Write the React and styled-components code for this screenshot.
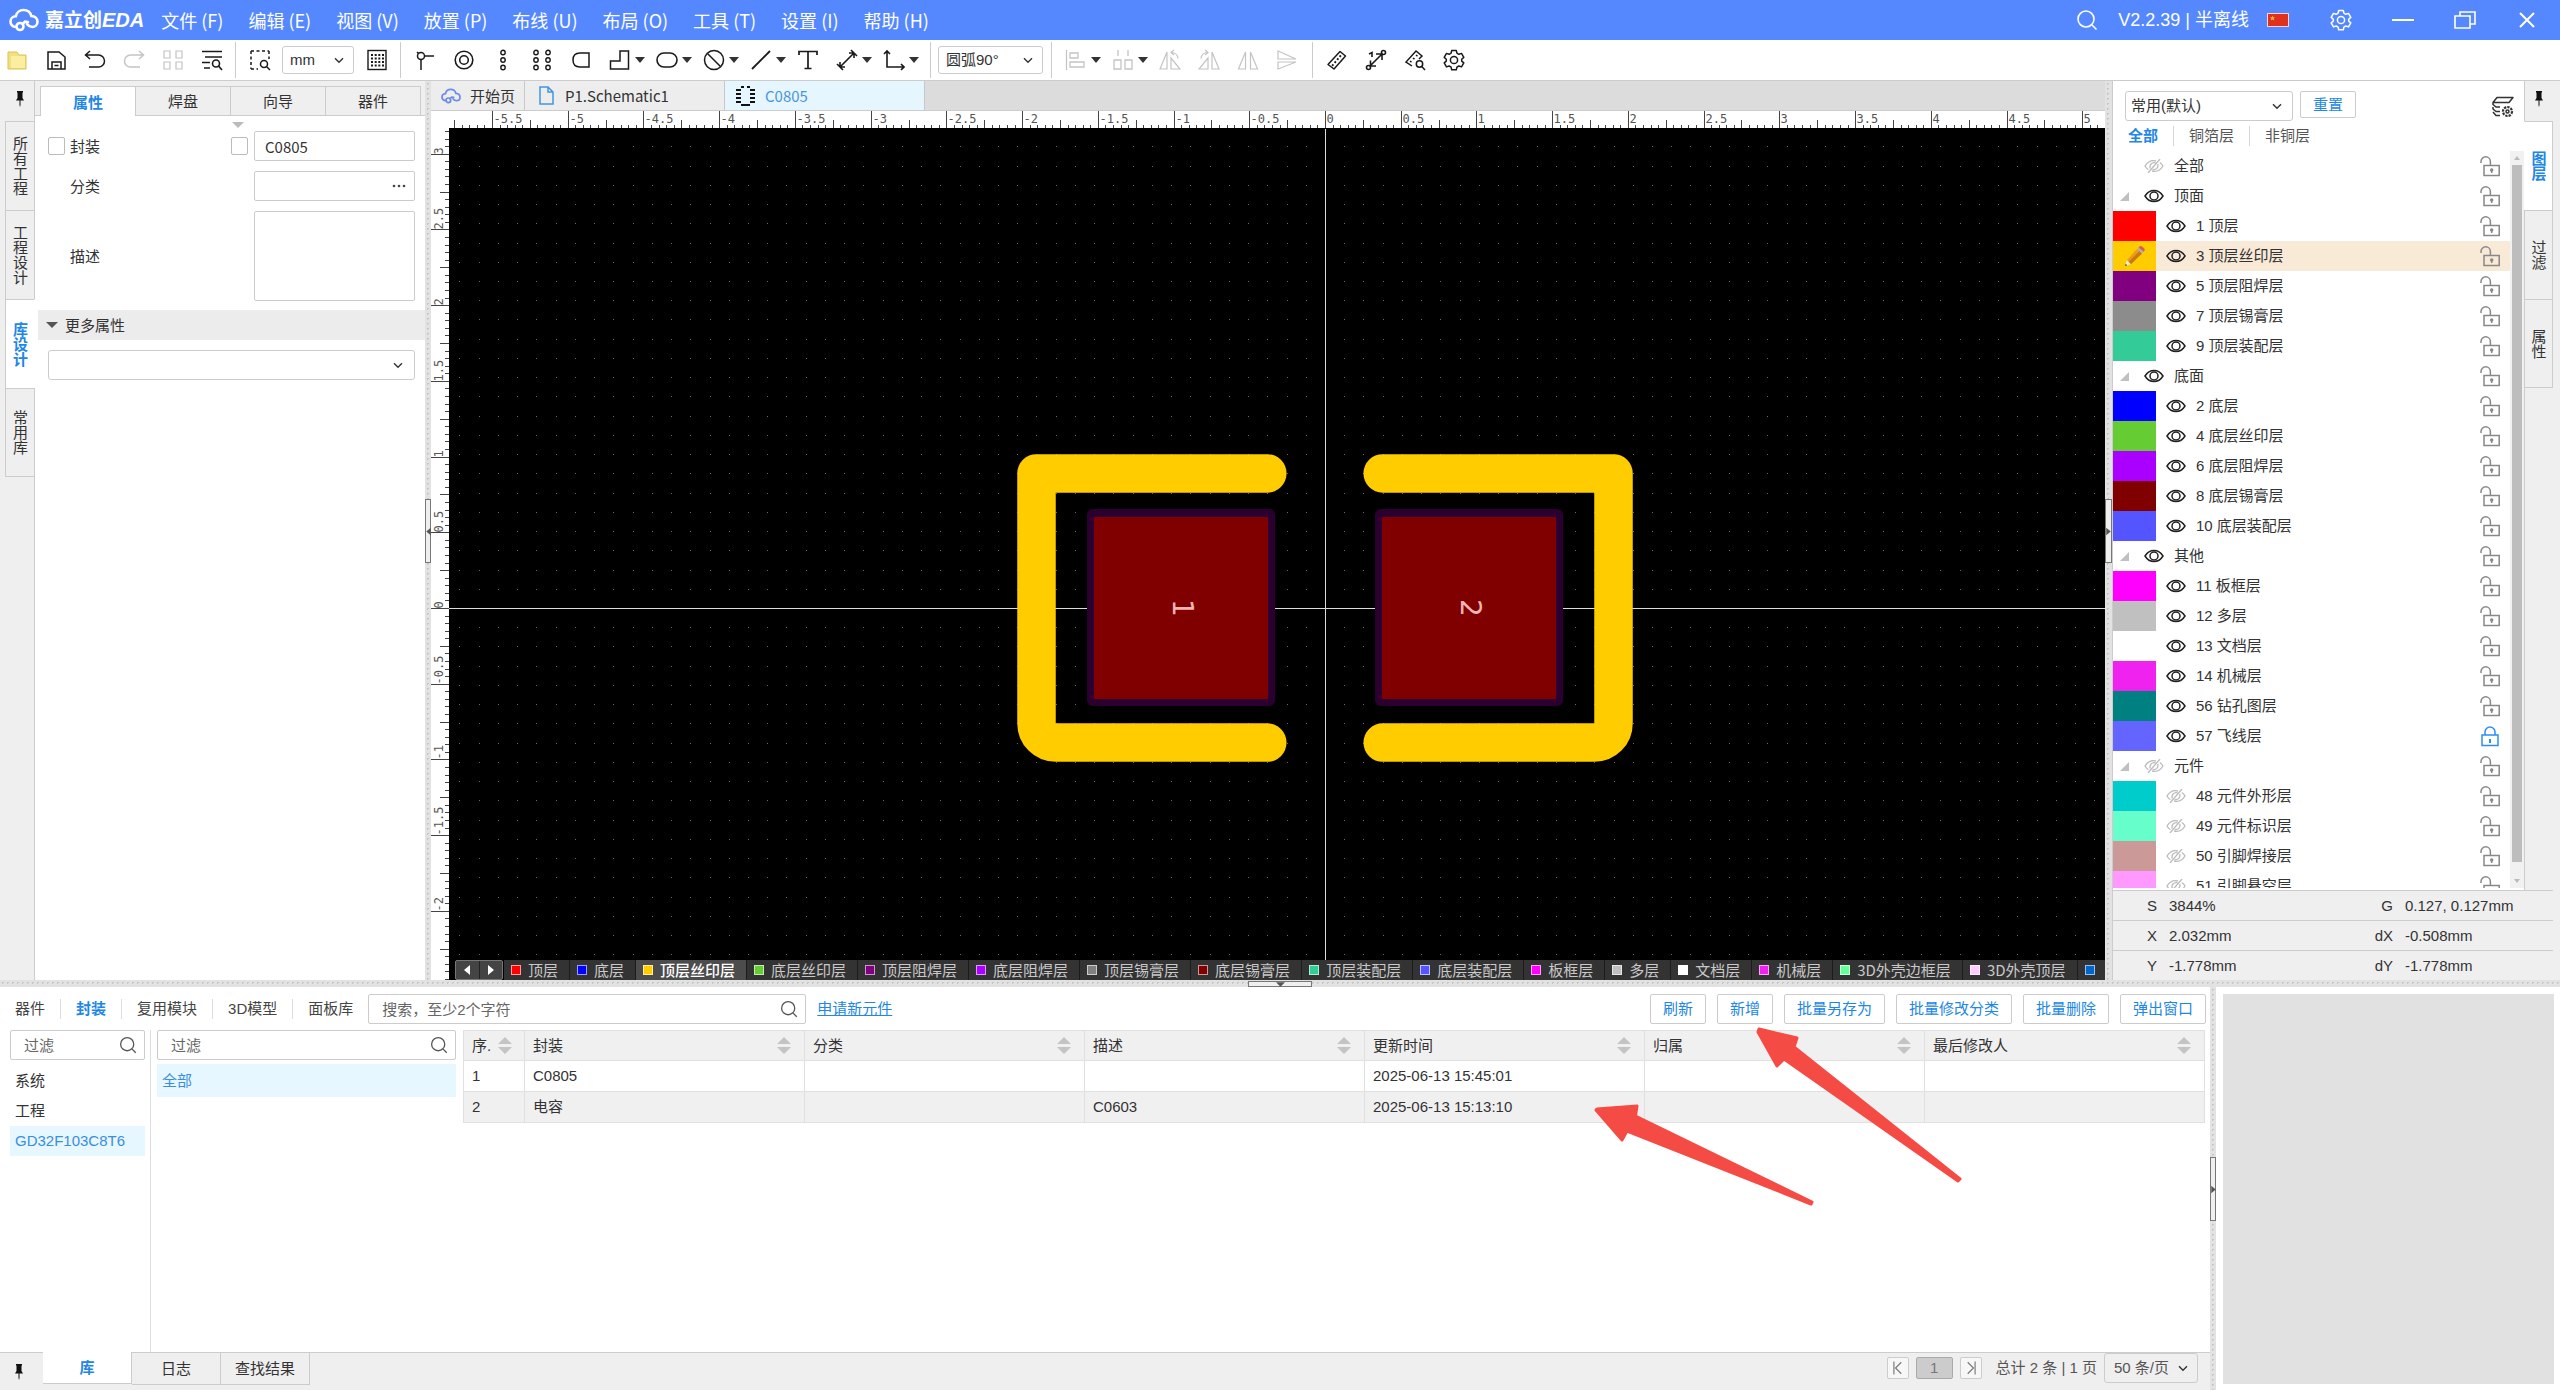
import React from "react";
import styled, { createGlobalStyle, css } from "styled-components";

const BLUE = "#2186e6";
const LINE = "#cccccc";
const GREY = "#efefef";

// canvas scale: pixels for 0.05mm on the rulers and for one 0.127mm grid cell
const TICK = 7.5725;
const CELL = 19.234;

const topLayers = [
  { id: 1, name: "顶层", color: "#ff0000" },
  { id: 3, name: "顶层丝印层", color: "#ffcc00", active: true },
  { id: 5, name: "顶层阻焊层", color: "#800080" },
  { id: 7, name: "顶层锡膏层", color: "#8c8c8c" },
  { id: 9, name: "顶层装配层", color: "#33cc99" },
];

const layerGroups = [
  { name: "顶面", visible: true, layers: topLayers },
  {
    name: "底面",
    visible: true,
    layers: [
      { id: 2, name: "底层", color: "#0000ff" },
      { id: 4, name: "底层丝印层", color: "#66cc33" },
      { id: 6, name: "底层阻焊层", color: "#aa00ff" },
      { id: 8, name: "底层锡膏层", color: "#800000" },
      { id: 10, name: "底层装配层", color: "#5555ff" },
    ],
  },
  {
    name: "其他",
    visible: true,
    layers: [
      { id: 11, name: "板框层", color: "#ff00ff" },
      { id: 12, name: "多层", color: "#c0c0c0" },
      { id: 13, name: "文档层", color: "#ffffff" },
      { id: 14, name: "机械层", color: "#f022f0" },
      { id: 56, name: "钻孔图层", color: "#008080" },
      { id: 57, name: "飞线层", color: "#6464ff", locked: true },
    ],
  },
  {
    name: "元件",
    visible: false,
    layers: [
      { id: 48, name: "元件外形层", color: "#00cccc" },
      { id: 49, name: "元件标识层", color: "#66ffcc" },
      { id: 50, name: "引脚焊接层", color: "#cc9999" },
      { id: 51, name: "引脚悬空层", color: "#ff99ff" },
    ],
  },
];

const layerTabs = [
  ["顶层", "#ff0000"],
  ["底层", "#0000ff"],
  ["顶层丝印层", "#ffcc00"],
  ["底层丝印层", "#66cc33"],
  ["顶层阻焊层", "#800080"],
  ["底层阻焊层", "#aa00ff"],
  ["顶层锡膏层", "#808080"],
  ["底层锡膏层", "#800000"],
  ["顶层装配层", "#33cc99"],
  ["底层装配层", "#5555ff"],
  ["板框层", "#ff00ff"],
  ["多层", "#c0c0c0"],
  ["文档层", "#ffffff"],
  ["机械层", "#f022f0"],
  ["3D外壳边框层", "#66ff99"],
  ["3D外壳顶层", "#ffccff"],
  ["", "#0066cc"],
];

const columns = ["序.", "封装", "分类", "描述", "更新时间", "归属", "最后修改人"];
const rows = [
  ["1", "C0805", "", "", "2025-06-13 15:45:01", "", ""],
  ["2", "电容", "", "C0603", "2025-06-13 15:13:10", "", ""],
];

const GlobalStyle = createGlobalStyle`
  *, *::before { box-sizing: border-box; }
  body {
    margin: 0;
    background: #fff;
    color: #333;
    font: 15px/20px "Noto Sans CJK SC", sans-serif;
  }
  button, input, select, textarea {
    font: inherit;
    color: inherit;
    margin: 0;
  }
  button {
    padding: 0;
    border: 0;
    background: none;
    white-space: nowrap;
  }
  a { color: inherit; text-decoration: none; }
  ul { margin: 0; padding: 0; list-style: none; }
  svg { display: block; }
`;

const Page = styled.div`
  height: 100vh;
  display: grid;
  grid-template-rows: 40px 40px minmax(0, 1fr) 7px 403px;
  overflow: hidden;
`;

/* ---------- title bar ---------- */

const TitleBar = styled.header`
  display: flex;
  align-items: center;
  background: #5588ff;
  color: #fff;
  font-size: 18px;
`;

const Logo = styled.a`
  display: flex;
  align-items: center;
  gap: 6px;
  padding-left: 9px;
  font-size: 19px;
  font-weight: 700;
`;

const LogoLatin = styled.i`
  font: italic 700 20px "Liberation Sans", sans-serif;
`;

const Menu = styled.nav`
  display: flex;
  flex: 1;
  gap: 25px;
  padding-left: 17px;
`;

const TitleRight = styled.div`
  display: flex;
  align-items: center;
  padding-right: 22px;
  font-family: "Liberation Sans", "Noto Sans CJK SC", sans-serif;
`;

const Version = styled.span`
  padding: 0 18px 0 20px;
`;

const WindowButtons = styled.div`
  display: flex;
  align-items: center;
  gap: 40px;
  padding-left: 41px;
`;

/* ---------- toolbar ---------- */

const Toolbar = styled.div`
  display: flex;
  align-items: center;
`;

const ToolGroup = styled.div`
  display: flex;
  align-items: center;
  height: 36px;
  padding: 0 ${(p) => p.$end ?? 12}px 0 ${(p) => p.$start ?? 13}px;
  border-right: 1px solid ${(p) => (p.$last ? "transparent" : LINE)};
`;

const ToolButton = styled.button`
  display: flex;
  align-items: center;
  gap: 4px;
  color: ${(p) => (p.$off ? "#c4c4c4" : "#1a1a1a")};
  margin-right: ${(p) => (p.$menu ? 10 : 17)}px;
  &:last-child { margin-right: 0; }
`;

const Caret = styled.span`
  border: 5px solid transparent;
  border-top: 6px solid #333;
  border-bottom: 0;
  height: 6px;
  margin-right: 1px;
`;

const SelectBox = styled.div`
  position: relative;
  display: flex;
  align-items: center;
  flex: none;
  width: ${(p) => p.$width};
  margin: ${(p) => p.$margin || 0};
  font-family: "Liberation Sans", "Noto Sans CJK SC", sans-serif;
  select {
    appearance: none;
    width: 100%;
    height: ${(p) => p.$height || 28}px;
    padding: 0 22px 0 ${(p) => p.$inset ?? 7}px;
    border: 1px solid ${LINE};
    border-radius: 3px;
    background: ${(p) => p.$bg || "#fff"};
  }
  svg {
    position: absolute;
    right: ${(p) => p.$arrow ?? 10}px;
    pointer-events: none;
  }
`;

/* ---------- work area ---------- */

const Workspace = styled.main`
  display: grid;
  grid-template-columns: 35px 390px 6px minmax(0, 1fr) 7px 412px 36px;
  min-height: 0;
  border-top: 1px solid ${LINE};
`;

const dots = css`
  background-color: #e2e2e2;
  background-image: radial-gradient(circle, #c6c6c6 1px, transparent 1px);
  background-size: 5px 5px;
`;

const Splitter = styled.div`
  position: relative;
  ${dots}
`;

const Handle = styled.button`
  position: absolute;
  left: 0;
  top: ${(p) => p.$top};
  width: 100%;
  height: 64px;
  display: flex;
  align-items: center;
  justify-content: center;
  background: ${GREY};
  border: 1px solid #777;
  svg { flex: none; }
`;

const FlatHandle = styled(Handle)`
  left: calc(50% - 32px);
  top: 1px;
  width: 64px;
  height: 6px;
`;

const SideStrip = styled.nav`
  display: flex;
  flex-direction: column;
  min-height: 0;
  background: ${GREY};
  padding: ${(p) => (p.$right ? "0 7px 0 0" : "0 0 0 5px")};
  border-${(p) => (p.$right ? "left" : "right")}: 1px solid ${LINE};
`;

const PinButton = styled.button`
  height: 40px;
  display: flex;
  align-items: center;
  justify-content: center;
  padding-bottom: 4px;
`;

const SideTab = styled.button`
  flex: none;
  height: 89px;
  display: flex;
  align-items: center;
  justify-content: center;
  writing-mode: vertical-rl;
  text-orientation: upright;
  border: 1px solid ${LINE};
  border-bottom-width: ${(p) => (p.$end ? 1 : 0)}px;
  background: ${(p) => (p.$active ? "#fff" : "transparent")};
  color: ${(p) => (p.$active ? BLUE : "#333")};
  font-weight: ${(p) => (p.$active ? 700 : 400)};
  margin: ${(p) => (p.$right ? "0 0 0 -1px" : "0 -1px 0 0")};
  border-${(p) => (p.$right ? "left" : "right")}-color: ${(p) => (p.$active ? "#fff" : LINE)};
`;

const LeftPanel = styled.section`
  display: flex;
  flex-direction: column;
  background: #fff;
`;

const PanelTabs = styled.div`
  display: flex;
  height: 35px;
  padding: 5px 4px 0 5px;
  background: ${GREY};
  border-bottom: 1px solid ${LINE};
`;

const PanelTab = styled.button`
  flex: 1;
  border: 1px solid ${LINE};
  border-left-width: ${(p) => (p.$first ? 1 : 0)}px;
  border-bottom: 0;
  margin-bottom: ${(p) => (p.$first ? -1 : 0)}px;
  background: ${(p) => (p.$first ? "#fff" : GREY)};
  color: ${(p) => (p.$first ? BLUE : "#333")};
  font-weight: ${(p) => (p.$first ? 700 : 400)};
`;

const Form = styled.form`
  display: grid;
  grid-template-columns: 17px minmax(0, 1fr) 18px 161px;
  column-gap: 5px;
  row-gap: 10px;
  align-items: center;
  padding: 0 10px 9px 13px;
  input[type="text"], textarea {
    grid-column: 4;
    width: 100%;
    height: 30px;
    padding: 0 10px;
    border: 1px solid ${LINE};
    border-radius: 2px;
    resize: none;
    background: transparent;
  }
  textarea { height: 90px; display: block; }
  label { grid-column: 2; }
`;

const Check = styled.input.attrs({ type: "checkbox" })`
  appearance: none;
  width: 17px;
  height: 18px;
  border: 1px solid #bbb;
  border-radius: 2px;
  background: #fff;
`;

const CollapseMark = styled.div`
  display: flex;
  justify-content: center;
  height: 15px;
  padding: 3px 0 0 16px;
`;

const MoreField = styled.div`
  grid-column: 4;
  position: relative;
  display: flex;
  button {
    position: absolute;
    right: 9px;
    top: 0;
    height: 30px;
  }
`;

const Section = styled.h2`
  display: flex;
  align-items: center;
  gap: 7px;
  height: 30px;
  margin: 0 0 10px 3px;
  padding-left: 8px;
  background: #ececec;
  font-size: 15px;
  font-weight: 400;
`;

const Editor = styled.section`
  display: flex;
  flex-direction: column;
  min-width: 0;
  min-height: 0;
`;

const FileTabs = styled.div`
  display: flex;
  flex: none;
  height: 30px;
  background: #dcdcdc;
  border-bottom: 1px solid ${LINE};
`;

const FileTab = styled.button`
  display: flex;
  align-items: center;
  gap: ${(p) => p.$gap || 9}px;
  width: ${(p) => p.$width}px;
  padding-left: ${(p) => p.$inset || 10}px;
  border-right: 1px solid #c8c8c8;
  background: ${(p) => (p.$active ? "#e6f6ff" : "#ededed")};
  color: ${(p) => (p.$active ? "#4a94dc" : "#333")};
`;

const Board = styled.div`
  flex: 1;
  min-height: 0;
  display: grid;
  grid-template-columns: 18px minmax(0, 1fr);
  grid-template-rows: 18px minmax(0, 1fr) 20px;
  background: #fff;
  svg { width: 100%; height: 100%; }
  text { font: 12px "DejaVu Sans Mono", monospace; fill: #555; }
`;

const TopRuler = styled.div`
  grid-column: 1 / 3;
  overflow: hidden;
`;

const LeftRuler = styled.div`
  grid-row: 2 / 4;
  overflow: hidden;
`;

const Canvas = styled.div`
  background: #000;
  overflow: hidden;
  .pin { font: 28px "DejaVu Sans", sans-serif; fill: #f0b4b4; text-anchor: middle; }
`;

const LayerBar = styled.div`
  display: flex;
  padding-left: 6px;
  background: #000;
  overflow: hidden;
  color: #ccc;
  svg { width: auto; height: auto; }
`;

const LayerArrows = styled.div`
  flex: none;
  display: flex;
  width: 48px;
  margin-right: 1px;
  border: 1px solid #777;
  border-radius: 2px;
  background: #444;
  button {
    flex: 1;
    display: flex;
    align-items: center;
    justify-content: center;
  }
  button + button { border-left: 1px solid #222; }
`;

const LayerTab = styled.button`
  flex: none;
  display: flex;
  align-items: center;
  gap: 7px;
  padding: 0 11px 0 7px;
  border-right: 1px solid #1c1c1c;
  background: ${(p) => (p.$active ? "#4c4c4c" : "#333")};
  color: ${(p) => (p.$active ? "#fff" : "#c8c8c8")};
  font-weight: ${(p) => (p.$active ? 500 : 400)};
  line-height: 20px;
  &::before {
    content: "";
    width: 10px;
    height: 10px;
    border: 1px solid rgba(255, 255, 255, 0.6);
    background: ${(p) => p.$color};
  }
`;

/* ---------- layer panel ---------- */

const LayerPanel = styled.section`
  display: flex;
  flex-direction: column;
  min-height: 0;
  background: #fff;
  border-left: 1px solid ${LINE};
  font-family: "Liberation Sans", "Noto Sans CJK SC", sans-serif;
`;

const LayerHead = styled.div`
  display: flex;
  align-items: flex-start;
  gap: 7px;
  padding: 10px 10px 0 12px;
  height: 45px;
  > button:last-child { margin: 5px 0 0 auto; }
`;

const PlainButton = styled.button`
  height: ${(p) => p.$height || 30}px;
  padding: 0 12px;
  border: 1px solid ${LINE};
  border-radius: 2px;
  background: #fff;
  color: ${BLUE};
`;

const LayerFilter = styled.div`
  display: flex;
  align-items: center;
  height: 20px;
  margin-bottom: 5px;
`;

const FilterTab = styled.button`
  height: 20px;
  padding: 0 15px;
  color: ${(p) => (p.$active ? BLUE : "#555")};
  font-weight: ${(p) => (p.$active ? 700 : 400)};
  & + & { border-left: 1px solid #d5d5d5; }
`;

const LayerScroll = styled.div`
  flex: 1;
  min-height: 0;
  display: flex;
`;

const LayerList = styled.ul`
  flex: 1;
  overflow: hidden;
`;

const LayerRow = styled.li`
  display: flex;
  align-items: center;
  height: 30px;
  padding-right: 10px;
  background: ${(p) => (p.$active ? "#f8ead6" : "#fff")};
`;

const Swatch = styled.span`
  display: flex;
  align-items: center;
  justify-content: center;
  width: 43px;
  height: 30px;
  margin-right: 10px;
  background: ${(p) => p.$color};
`;

const GroupMark = styled.span`
  display: flex;
  width: 31px;
  padding-left: 7px;
`;

const LayerName = styled.span`
  flex: 1;
  padding-left: 10px;
`;

const Scrollbar = styled.div`
  display: flex;
  flex-direction: column;
  align-items: center;
  justify-content: space-between;
  width: 14px;
  padding: 5px 0;
  background: #f1f1f1;
  svg { flex: none; }
`;

const Thumb = styled.div`
  width: 10px;
  flex: 1;
  margin: 5px 0 17px;
  background: #bdbdbd;
`;

const StatusList = styled.dl`
  flex: none;
  margin: 2px -29px 0 0;
  position: relative;
  background: ${GREY};
`;

const StatusRow = styled.div`
  display: grid;
  grid-template-columns: 44px 168px 44px 1fr;
  column-gap: 12px;
  align-items: center;
  height: 30px;
  border-top: 1px solid ${LINE};
  dt { text-align: right; }
  dd { margin: 0; }
`;

/* ---------- library ---------- */

const Bottom = styled.section`
  position: relative;
  display: grid;
  grid-template-columns: minmax(0, 1fr) 6px 344px;
  min-height: 0;
  font-family: "Liberation Sans", "Noto Sans CJK SC", sans-serif;
`;

const Library = styled.div`
  display: flex;
  flex-direction: column;
  min-width: 0;
`;

const LibraryHead = styled.div`
  display: flex;
  align-items: center;
  gap: 11px;
  padding: 7px 4px 6px 0;
`;

const LibraryTabs = styled.div`
  display: flex;
  margin-right: -11px;
`;

const LibraryTab = styled.button`
  height: 20px;
  line-height: 20px;
  padding: 0 15px;
  color: ${(p) => (p.$active ? BLUE : "#444")};
  font-weight: ${(p) => (p.$active ? 700 : 400)};
  & + & { border-left: 1px solid #ddd; }
`;

const SearchBox = styled.div`
  position: relative;
  display: flex;
  align-items: center;
  flex: none;
  width: ${(p) => p.$width};
  input {
    width: 100%;
    height: 30px;
    padding: 0 32px 0 13px;
    border: 1px solid ${LINE};
    border-radius: 2px;
    background: #fff;
  }
  input::placeholder { color: #666; opacity: 1; }
  button {
    position: absolute;
    right: 8px;
    color: #555;
  }
`;

const ApplyLink = styled.a`
  color: ${BLUE};
  text-decoration: underline;
  margin-right: auto;
`;

const LibraryBody = styled.div`
  flex: 1;
  display: grid;
  grid-template-columns: 151px 306px minmax(0, 1fr);
  padding-right: 5px;
`;

const ProjectColumn = styled.div`
  padding: 0 5px 0 10px;
  border-right: 1px solid #ddd;
`;

const ClassColumn = styled.div`
  padding: 0 1px 0 6px;
`;

const PickList = styled.ul`
  padding-top: ${(p) => p.$top}px;
`;

const Pick = styled.button`
  display: block;
  width: 100%;
  height: ${(p) => p.$height || 30}px;
  padding-left: 5px;
  text-align: left;
  background: ${(p) => (p.$active ? "#e6f7ff" : "transparent")};
  color: ${(p) => (p.$active ? "#3a8ee0" : "#333")};
`;

const TableBox = styled.div`
  padding-left: 6px;
`;

const Table = styled.table`
  width: 100%;
  table-layout: fixed;
  border-collapse: collapse;
  th, td {
    height: 31px;
    padding: 0 8px;
    border: 1px solid #e0e0e0;
    text-align: left;
    font-weight: 400;
  }
  th { background: #f0f0f0; height: 30px; }
  tbody tr:nth-child(2) td { background: #f0f0f0; }
  col:first-child { width: 61px; }
`;

const Head = styled.div`
  display: flex;
  align-items: center;
  justify-content: space-between;
  margin-right: ${(p) => p.$pad}px;
`;

const Footer = styled.footer`
  display: flex;
  align-items: flex-start;
  height: 38px;
  background: ${GREY};
  border-top: 1px solid ${LINE};
`;

const FooterPin = styled(PinButton)`
  width: 43px;
  height: 38px;
  padding: 0 6px 0 0;
`;

const FooterTab = styled.button`
  width: 89px;
  height: 32px;
  border: 1px solid ${LINE};
  border-top: 0;
  border-left: 0;
  background: ${(p) => (p.$active ? "#fff" : "transparent")};
  color: ${(p) => (p.$active ? BLUE : "#333")};
  font-weight: ${(p) => (p.$active ? 700 : 400)};
  margin-top: ${(p) => (p.$active ? -1 : 0)}px;
  padding-top: ${(p) => (p.$active ? 1 : 0)}px;
`;

const Pager = styled.div`
  display: flex;
  align-items: center;
  gap: 7px;
  height: 30px;
  margin-left: auto;
  padding-right: 12px;
  color: #555;
`;

const PageButton = styled.button`
  display: flex;
  align-items: center;
  justify-content: center;
  width: ${(p) => (p.$current ? 37 : 22)}px;
  height: 22px;
  border: 1px solid ${(p) => (p.$current ? "#aaa" : LINE)};
  border-radius: 2px;
  background: ${(p) => (p.$current ? "#ccc" : "#f7f7f7")};
  color: #777;
`;

const PageInfo = styled.span`
  padding-left: 7px;
`;

const Preview = styled.div`
  margin: 7px 6px 6px 7px;
  background: #e1e1e1;
`;

const Pointers = styled.svg`
  position: absolute;
  left: 1580px;
  top: 30px;
  pointer-events: none;
`;

/* ---------- icons ---------- */

const Icon = ({ size = 22, width = 1.5, children, ...rest }) => (
  <svg width={size} height={size} viewBox="0 0 22 22" fill="none" stroke="currentColor" strokeWidth={width} {...rest}>
    {children}
  </svg>
);

const Chevron = () => (
  <svg width="10" height="7" viewBox="0 0 10 7" fill="none" stroke="#333" strokeWidth="1.4">
    <path d="M1 1.2l4 4 4-4" />
  </svg>
);

const Search = ({ size = 18 }) => (
  <Icon size={size} width={1.6}>
    <circle cx="10" cy="10" r="8" />
    <path d="M16 16l4.5 4.5" />
  </Icon>
);

const gearPath =
  "M8.7 1.5h4.6l.6 2.7 1.9 1.1 2.7-.9 2.3 4-2.1 1.8v1.9l2.1 1.8-2.3 4-2.7-.9-1.9 1.1-.6 2.7H8.7l-.6-2.7-1.9-1.1-2.7.9-2.3-4 2.1-1.8v-1.9L1.2 8.4l2.3-4 2.7.9 1.9-1.1z";

const Gear = () => (
  <Icon>
    <path d={gearPath} strokeLinejoin="round" />
    <circle cx="11" cy="11" r="3.6" />
  </Icon>
);

const Cloud = ({ width = 30, stroke = "#fff", weight = 2.6 }) => (
  <svg width={width} height={width * 0.8} viewBox="0 0 30 24" fill="none" stroke={stroke} strokeWidth={weight} strokeLinecap="round">
    <path d="M6.5 19C3.5 18.5 1.5 16.3 1.5 13.5 1.5 10.5 3.8 8.500 6.800 8.300 7.500 4.500 10.800 2 14.500 2c4 0 7 2.500 7.800 6 3.700.2 6.200 2.500 6.200 5.800 0 3.200-2.500 5.200-5.300 5.200-2.200 0-3.700-1-5.200-2.800" />
    <circle cx="11" cy="18.500" r="3.500" />
    <path d="M13.600 16l2.400-2.300 3 .3" />
  </svg>
);

const Pin = () => (
  <svg width="10" height="16" viewBox="0 0 10 16" fill="#111">
    <path d="M2 0h6v1.500H7.500V7L9 9.500H5.500V14L5 16l-.5-2V9.500H1L2.500 7V1.500H2z" />
  </svg>
);

const Eye = ({ on }) =>
  on ? (
    <svg width="20" height="14" viewBox="0 0 20 14" fill="none" stroke="#222" strokeWidth="1.5">
      <path d="M1 7C5.500-.4 14.500-.4 19 7 14.500 14.400 5.500 14.400 1 7z" />
      <circle cx="10" cy="7" r="4" />
    </svg>
  ) : (
    <svg width="20" height="14" viewBox="0 0 20 14" fill="none" stroke="#bbb" strokeWidth="1.3">
      <path d="M12 2C7.500.8 3.500 3 1 7c.8 1.500 2 2.800 3.400 3.700M15.800 3.500C17 4.400 18.200 5.500 19 7c-2.500 4-6.500 6.200-11 5" />
      <path d="M6.300 9.500C5 6 8 2.800 11.500 3.800M13.700 5c1 3.500-1.800 6.300-5 5.400M4 14L16 0" />
    </svg>
  );

const Lock = ({ on }) => (
  <svg width="20" height="21" viewBox="0 0 20 21" fill="none" stroke={on ? "#2f8df0" : "#888"} strokeWidth="1.5">
    {on ? (
      <>
        <rect x="2" y="9" width="16" height="10.5" />
        <path d="M5 9V6a5 5 0 0 1 10 0v3" />
        <path d="M10 13v4" strokeWidth="2" />
      </>
    ) : (
      <>
        <rect x="4" y="9.5" width="15.2" height="10" />
        <path d="M1 7V5.500a4.700 4.700 0 0 1 9.400 0v4" />
        <path d="M11.700 13v4" />
        <circle cx="11.7" cy="14" r="1" />
      </>
    )}
  </svg>
);

const Sort = () => (
  <svg width="14" height="17" viewBox="0 0 14 17" fill="#c4c4c4">
    <path d="M7 0l7 7H0zM7 17l7-7H0z" />
  </svg>
);

const Triangle = ({ dir, fill = "#555", size = 12 }) => (
  <svg width={size} height={size} viewBox="0 0 12 12" fill={fill}>
    {dir === "left" && <path d="M9 1v10L3 6z" />}
    {dir === "right" && <path d="M3 1v10l6-5z" />}
    {dir === "down" && <path d="M0 3h12l-6 6z" />}
  </svg>
);

const Pencil = () => (
  <svg width="22" height="22" viewBox="0 0 22 22">
    <path d="M1 21l2-6 4 4z" fill="#fff3d6" />
    <path d="M1 21l.8-2.200 1.400 1.400z" fill="#333" />
    <path d="M3 15L13 4l5 4.500L7 19z" fill="#f09a1a" />
    <path d="M4.700 16.800L15.500 6l2.500 2.500L7 19z" fill="#c97812" />
    <path d="M13 4l1.500-1.600 5 4.400L18 8.500z" fill="#aab4bd" />
    <path d="M14.500 2.400L16 1q3 0 5 4l-1.500 1.800z" fill="#d9605a" />
  </svg>
);

const Chip = () => (
  <svg width="21" height="20" viewBox="0 0 21 20" stroke="#111" strokeWidth="2">
    <path d="M1 4h5M1 8h5M1 12h5M1 16h5M15 4h5M15 8h5M15 12h5M15 16h5M6 1h3M12 1h3M6 19h9" />
  </svg>
);

const Mirror = ({ flip, turn }) => (
  <Icon width={1.2} transform={flip ? "scale(-1 1)" : undefined}>
    {turn ? (
      <path d="M1 20L8 3v17zM12 9v11h9zM12 3.500c4 0 6.500 2 7 6M15 1l-3 2.500L15 6" />
    ) : (
      <path d="M1.500 20L8.500 3v17zM20.500 20L13.500 3v17z" />
    )}
  </Icon>
);

const RulerShape = () => (
  <>
    <path d="M2 15.500L14 2.500l5.500 4.500L8 20z" strokeLinejoin="round" />
    <path d="M6 15.500l1.500 1.200M8.500 12.500l1.500 1.300M11 9.500l1.500 1.300M13.500 6.500l1.500 1.300" strokeWidth="1.8" />
  </>
);

const tools = {
  open: (
    <svg width="22" height="22" viewBox="0 0 22 22">
      <path d="M2 3h9l2 3h7v14H2z" fill="#f2df7e" stroke="#d9c35a" />
      <path d="M5 7h14v12H5z" fill="#fbeea0" />
    </svg>
  ),
  save: (
    <Icon>
      <path d="M3 3h11l6 5v12H3zM7 20v-7h9v7M9.500 16.500h4" />
    </Icon>
  ),
  undo: (
    <Icon>
      <path d="M6 2L1.500 6 6 10M1.500 6h13a5.500 5.500 0 0 1 0 12H5" />
    </Icon>
  ),
  redo: (
    <Icon>
      <path d="M16 2l4.500 4L16 10M20.500 6h-13a5.500 5.500 0 0 0 0 12H17" />
    </Icon>
  ),
  tiles: (
    <Icon width={1.2}>
      <path d="M2 2h6v7H2zM14 2h6v7h-6zM2 13h6v7H2zM14 13h6v7h-6z" />
    </Icon>
  ),
  find: (
    <Icon width={1.6}>
      <path d="M1 2.500h20M4 8h17M1 13.500h8M3 19h6" />
      <circle cx="15" cy="14.5" r="3.5" />
      <path d="M17.500 17l3.500 4" />
    </Icon>
  ),
  zoomArea: (
    <Icon>
      <path d="M2 2h18M2 2v18M20 2v8M2 20h7" strokeDasharray="3 2.5" />
      <circle cx="15" cy="15" r="3.5" />
      <path d="M17.500 17.500L21 21" />
    </Icon>
  ),
  grid: (
    <Icon width={1.4}>
      <rect x="2" y="1.5" width="18" height="19" />
      <path d="M5 6h2M8.700 6h2M12.300 6h2M16 6h2M5 9.500h2M8.700 9.500h2M12.300 9.500h2M16 9.500h2M5 13h2M8.700 13h2M12.300 13h2M16 13h2M5 16.500h2M8.700 16.500h2M12.300 16.500h2M16 16.500h2" strokeWidth="2" />
    </Icon>
  ),
  pin: (
    <Icon>
      <circle cx="7" cy="7" r="3.5" />
      <path d="M10.500 7H20M7 10.500V21M3 3l1.500 1.500" />
    </Icon>
  ),
  via: (
    <Icon width={1.6}>
      <circle cx="11" cy="11" r="8.8" />
      <circle cx="11" cy="11" r="4.3" />
    </Icon>
  ),
  dots3: (
    <Icon width={1.4}>
      {[3.5, 11, 18.5].map((y) => <circle key={y} cx="11" cy={y} r="2.2" />)}
    </Icon>
  ),
  dots6: (
    <Icon width={1.4}>
      {[3.5, 11, 18.5].map((y) => (
        <React.Fragment key={y}>
          <circle cx="5" cy={y} r="2.2" />
          <circle cx="17" cy={y} r="2.2" />
        </React.Fragment>
      ))}
    </Icon>
  ),
  shape: (
    <Icon>
      <path d="M19 4v14h-9q-7 0-7-7t7-7z" />
    </Icon>
  ),
  polygon: (
    <Icon>
      <path d="M11 2h8.500v18H1.500V12H11z" />
    </Icon>
  ),
  oval: (
    <Icon width={1.6}>
      <rect x="1" y="4" width="20" height="14" rx="7" />
    </Icon>
  ),
  forbid: (
    <Icon>
      <circle cx="11" cy="11" r="9.5" />
      <path d="M4.500 4.500l13 13" />
    </Icon>
  ),
  line: (
    <Icon width={1.8}>
      <path d="M2 20L20 2" />
    </Icon>
  ),
  text: (
    <Icon width={1.7}>
      <path d="M2 6V2.500h18V6M11 2.500v17M7.500 19.500h7" />
    </Icon>
  ),
  measure: (
    <Icon width={1.6}>
      <path d="M4 18L18 4M1 15l6 6M15 1l6 6M4 18v-5M4 18h5M18 4v5M18 4h-5" />
    </Icon>
  ),
  origin: (
    <Icon width={1.6}>
      <path d="M4 2v16h17M1 5l3-3 3 3M18 15l3 3-3 3" />
    </Icon>
  ),
  align: (
    <Icon width={1.3}>
      <path d="M1.500 1v20M5 4h8v5H5zM5 13h14v5H5z" />
    </Icon>
  ),
  spread: (
    <Icon width={1.3}>
      <path d="M6 1v6M16 1v6M2 11h7v9H2zM13 11h7v9h-7z" />
    </Icon>
  ),
  flipV: (
    <Icon width={1.2}>
      <path d="M2 2l18 8H2zM2 20l18-7H2z" />
    </Icon>
  ),
  ruler: <Icon><RulerShape /></Icon>,
  distance: (
    <Icon width={1.6}>
      <circle cx="3.5" cy="18.5" r="2" />
      <circle cx="18.5" cy="3.5" r="2" />
      <path d="M5 17L17 5M5.500 11.500V17H11M11 5h6v6M4 5l3-1.500V8" />
    </Icon>
  ),
  rulerFind: (
    <Icon>
      <path d="M8 17l-6-4L12 2l6 5-3 3M6 12l1.500 1.200M9 9l1.500 1.200M12 6l1.500 1.200" />
      <circle cx="15.5" cy="15" r="3.2" />
      <path d="M17.800 17.500L21 21" />
    </Icon>
  ),
  settings: <Gear />,
};

const Tool = ({ label, icon, menu, off }) => (
  <ToolButton type="button" aria-label={label} $menu={menu} $off={off}>
    {tools[icon] || icon}
    {menu && <Caret />}
  </ToolButton>
);

/* ---------- drawing ---------- */

const range = (from, to) => Array.from({ length: to - from + 1 }, (_, i) => from + i);

const HorizontalRuler = () => (
  <svg>
    {range(-115, 102).map((i) => {
      const x = Math.round(894 + i * TICK) + 0.5;
      const len = i % 10 === 0 ? 18 : i % 5 === 0 ? 9 : 4;
      return (
        <g key={i}>
          <path d={`M${x} 18v-${len}`} stroke="#444" />
          {i % 10 === 0 && <text x={x + 1} y="12">{i / 20}</text>}
        </g>
      );
    })}
    <path d="M18 17.500H4000" stroke="#000" />
  </svg>
);

const VerticalRuler = () => (
  <svg>
    {range(-49, 63).map((i) => {
      const y = Math.round(479 - i * TICK) + 0.5;
      const len = i % 10 === 0 ? 18 : i % 5 === 0 ? 9 : 4;
      return (
        <g key={i}>
          <path d={`M18 ${y}h-${len}`} stroke="#444" />
          {i % 10 === 0 && <text transform={`translate(12 ${y}) rotate(-90)`}>{i / 20}</text>}
        </g>
      );
    })}
  </svg>
);

const gridDots = range(-45, 42)
  .map((i) => range(-24, 19).map((j) => `M${Math.round(i * CELL)} ${Math.round(j * CELL)}h1v1h-1z`).join(""))
  .join("");

const Footprint = () => (
  <svg>
    <g transform="translate(876 479)">
      <path d={gridDots} fill="#6a6a6a" />
      <path d="M-900 .5H1000M.5-500V500" stroke="#dcdcdc" />
      <g fill="none" stroke="#ffcc00" strokeWidth="38.5" strokeLinecap="round" strokeLinejoin="round">
        <path d="M-57.700-134.600H-288.500V115.400A19.200 19.200 0 0 0-269.300 134.600H-57.700" />
        <path d="M57.700-134.600H288.500V115.400A19.200 19.200 0 0 1 269.300 134.600H57.700" />
      </g>
      <rect x="-238" y="-99" width="188" height="197" rx="6" fill="#2b0030" />
      <rect x="50" y="-99" width="188" height="197" rx="6" fill="#2b0030" />
      <rect x="-231" y="-91" width="174" height="182" fill="#800000" />
      <rect x="57" y="-91" width="174" height="182" fill="#800000" />
      <text className="pin" transform="translate(-152 0) rotate(90)">1</text>
      <text className="pin" transform="translate(136 0) rotate(90)">2</text>
    </g>
  </svg>
);

/* ---------- page parts ---------- */

const Title = () => (
  <TitleBar>
    <Logo href="#home">
      <Cloud />
      <span>嘉立创<LogoLatin>EDA</LogoLatin></span>
    </Logo>
    <Menu>
      {["文件 (F)", "编辑 (E)", "视图 (V)", "放置 (P)", "布线 (U)", "布局 (O)", "工具 (T)", "设置 (I)", "帮助 (H)"].map((m) => (
        <button type="button" key={m}>{m}</button>
      ))}
    </Menu>
    <TitleRight>
      <button type="button" aria-label="搜索"><Search size={22} /></button>
      <Version>V2.2.39 | 半离线</Version>
      <svg width="22" height="14" viewBox="0 0 22 14">
        <rect x=".5" y=".5" width="21" height="13" fill="#e0301e" stroke="#f5d0cc" />
        <path d="M5.500 2.500l.8 1.800 2 .1-1.600 1.200.6 1.900-1.800-1.100-1.700 1.100.6-1.900L2.800 4.400l2-.1z" fill="#ffb43c" />
      </svg>
      <WindowButtons>
        <button type="button" aria-label="设置"><Gear /></button>
        <button type="button" aria-label="最小化">
          <Icon><path d="M0 11h22" strokeWidth="2" /></Icon>
        </button>
        <button type="button" aria-label="还原">
          <Icon><path d="M1 7h15v12H1zM6 7V3h15v12h-5" strokeWidth="1.6" /></Icon>
        </button>
        <button type="button" aria-label="关闭">
          <Icon><path d="M4 4l14 14M18 4L4 18" strokeWidth="2" /></Icon>
        </button>
      </WindowButtons>
    </TitleRight>
  </TitleBar>
);

const Tools = () => (
  <Toolbar>
    <ToolGroup $start={6}>
      <Tool label="打开" icon="open" />
      <Tool label="保存" icon="save" />
      <Tool label="撤销" icon="undo" />
      <Tool label="重做" icon="redo" off />
      <Tool label="排列" icon="tiles" off />
      <Tool label="查找" icon="find" />
    </ToolGroup>
    <ToolGroup>
      <Tool label="框选缩放" icon="zoomArea" />
      <SelectBox $width="72px" $margin="0 12px 0 -6px">
        <select aria-label="单位" defaultValue="mm"><option>mm</option></select>
        <Chevron />
      </SelectBox>
      <Tool label="网格" icon="grid" />
    </ToolGroup>
    <ToolGroup $end={10}>
      <Tool label="焊盘" icon="pin" />
      <Tool label="过孔" icon="via" />
      <Tool label="单排" icon="dots3" />
      <Tool label="双排" icon="dots6" />
      <Tool label="挖槽" icon="shape" />
      <Tool label="多边形" icon="polygon" menu />
      <Tool label="填充" icon="oval" menu />
      <Tool label="禁止区域" icon="forbid" menu />
      <Tool label="线条" icon="line" menu />
      <Tool label="文本" icon="text" />
      <Tool label="尺寸" icon="measure" menu />
      <Tool label="原点" icon="origin" menu />
    </ToolGroup>
    <ToolGroup $start={7} $end={8}>
      <SelectBox $width="105px">
        <select aria-label="拐角" defaultValue="圆弧90°"><option>圆弧90°</option></select>
        <Chevron />
      </SelectBox>
    </ToolGroup>
    <ToolGroup $end={14}>
      <Tool label="对齐" icon="align" menu off />
      <Tool label="分布" icon="spread" menu off />
      <Tool label="左转" icon={<Mirror turn />} off />
      <Tool label="右转" icon={<Mirror turn flip />} off />
      <Tool label="左右翻转" icon={<Mirror />} off />
      <Tool label="上下翻转" icon="flipV" off />
    </ToolGroup>
    <ToolGroup $last>
      <Tool label="测量" icon="ruler" />
      <Tool label="测量距离" icon="distance" />
      <Tool label="检查尺寸" icon="rulerFind" />
      <Tool label="设置" icon="settings" />
    </ToolGroup>
  </Toolbar>
);

const Properties = () => (
  <LeftPanel>
    <PanelTabs>
      <PanelTab type="button" $first>属性</PanelTab>
      <PanelTab type="button">焊盘</PanelTab>
      <PanelTab type="button">向导</PanelTab>
      <PanelTab type="button">器件</PanelTab>
    </PanelTabs>
    <CollapseMark><Triangle dir="down" fill="#bbb" /></CollapseMark>
    <Form>
      <Check aria-label="选择封装" />
      <label htmlFor="footprint">封装</label>
      <Check aria-label="显示封装" />
      <input id="footprint" type="text" defaultValue="C0805" />
      <label htmlFor="category">分类</label>
      <MoreField>
        <input id="category" type="text" />
        <button type="button" aria-label="选择分类">
          <svg width="14" height="4" viewBox="0 0 14 4" fill="#444">
            <circle cx="2" cy="2" r="1.3" />
            <circle cx="7" cy="2" r="1.3" />
            <circle cx="12" cy="2" r="1.3" />
          </svg>
        </button>
      </MoreField>
      <label htmlFor="desc">描述</label>
      <textarea id="desc" />
    </Form>
    <Section><Triangle dir="down" />更多属性</Section>
    <SelectBox $width="auto" $margin="0 10px 0 13px" $height={30} $arrow={12}>
      <select aria-label="更多属性"><option></option></select>
      <Chevron />
    </SelectBox>
  </LeftPanel>
);

const BoardEditor = () => (
  <Editor>
    <FileTabs>
      <FileTab type="button" $width={94}><Cloud width={20} stroke="#6b8be8" />开始页</FileTab>
      <FileTab type="button" $width={200} $inset={14} $gap={11}>
        <svg width="15" height="19" viewBox="0 0 15 19" fill="none" stroke="#3f97e0" strokeWidth="1.5">
          <path d="M1 1h8l5 5v12H1zM9 1v5h5" />
        </svg>
        P1.Schematic1
      </FileTab>
      <FileTab type="button" $width={200} $active><Chip />C0805</FileTab>
    </FileTabs>
    <Board>
      <TopRuler><HorizontalRuler /></TopRuler>
      <LeftRuler><VerticalRuler /></LeftRuler>
      <Canvas><Footprint /></Canvas>
      <LayerBar>
        <LayerArrows>
          <button type="button" aria-label="向左"><Triangle dir="left" fill="#fff" /></button>
          <button type="button" aria-label="向右"><Triangle dir="right" fill="#fff" /></button>
        </LayerArrows>
        {layerTabs.map(([name, color], i) => (
          <LayerTab type="button" key={color + i} $color={color} $active={i === 2} aria-label={name || "3D外壳底层"}>
            {name}
          </LayerTab>
        ))}
      </LayerBar>
    </Board>
  </Editor>
);

const Layers = () => (
  <LayerPanel>
    <LayerHead>
      <SelectBox $width="168px" $height={30} $inset={5} $arrow={11}>
        <select aria-label="图层方案" defaultValue="常用(默认)"><option>常用(默认)</option></select>
        <Chevron />
      </SelectBox>
      <PlainButton type="button" $height={27}>重置</PlainButton>
      <button type="button" aria-label="图层管理器">
        <Icon>
          <path d="M5 1.500h16l-4 5H1zM1 6.500v2l3 2.500h4M1 11v2l3 2.500h4M1 16l3 3.500h4" strokeLinejoin="round" />
          <circle cx="15.5" cy="15.5" r="4.5" strokeDasharray="2.4 1" strokeWidth="2.2" />
          <circle cx="15.5" cy="15.5" r="1.5" />
        </Icon>
      </button>
    </LayerHead>
    <LayerFilter>
      <FilterTab type="button" $active>全部</FilterTab>
      <FilterTab type="button">铜箔层</FilterTab>
      <FilterTab type="button">非铜层</FilterTab>
    </LayerFilter>
    <LayerScroll>
      <LayerList>
        <LayerRow>
          <GroupMark />
          <button type="button" aria-label="显示全部"><Eye /></button>
          <LayerName>全部</LayerName>
          <button type="button" aria-label="锁定全部"><Lock /></button>
        </LayerRow>
        {layerGroups.map((group) => (
          <React.Fragment key={group.name}>
            <LayerRow>
              <GroupMark>
                <svg width="9" height="9" viewBox="0 0 9 9" fill="#c0c0c0"><path d="M9 0v9H0z" /></svg>
              </GroupMark>
              <button type="button" aria-label={`显示${group.name}`}><Eye on={group.visible} /></button>
              <LayerName>{group.name}</LayerName>
              <button type="button" aria-label={`锁定${group.name}`}><Lock /></button>
            </LayerRow>
            {group.layers.map((layer) => (
              <LayerRow key={layer.id} $active={layer.active}>
                <Swatch $color={layer.color}>{layer.active && <Pencil />}</Swatch>
                <button type="button" aria-label={`显示${layer.name}`}><Eye on={group.visible} /></button>
                <LayerName>{layer.id} {layer.name}</LayerName>
                <button type="button" aria-label={`锁定${layer.name}`}><Lock on={layer.locked} /></button>
              </LayerRow>
            ))}
          </React.Fragment>
        ))}
      </LayerList>
      <Scrollbar>
        <svg width="6" height="4" viewBox="0 0 6 4" fill="#bbb"><path d="M3 0l3 4H0z" /></svg>
        <Thumb />
        <svg width="6" height="4" viewBox="0 0 6 4" fill="#bbb"><path d="M3 4l3-4H0z" /></svg>
      </Scrollbar>
    </LayerScroll>
    <StatusList>
      <StatusRow><dt>S</dt><dd>3844%</dd><dt>G</dt><dd>0.127, 0.127mm</dd></StatusRow>
      <StatusRow><dt>X</dt><dd>2.032mm</dd><dt>dX</dt><dd>-0.508mm</dd></StatusRow>
      <StatusRow><dt>Y</dt><dd>-1.778mm</dd><dt>dY</dt><dd>-1.778mm</dd></StatusRow>
    </StatusList>
  </LayerPanel>
);

const LibraryPanel = () => (
  <Library>
    <LibraryHead>
      <LibraryTabs>
        <LibraryTab type="button">器件</LibraryTab>
        <LibraryTab type="button" $active>封装</LibraryTab>
        <LibraryTab type="button">复用模块</LibraryTab>
        <LibraryTab type="button">3D模型</LibraryTab>
        <LibraryTab type="button">面板库</LibraryTab>
      </LibraryTabs>
      <SearchBox $width="438px">
        <input type="text" aria-label="搜索" placeholder="搜索，至少2个字符" />
        <button type="button" aria-label="搜索"><Search /></button>
      </SearchBox>
      <ApplyLink href="#apply">申请新元件</ApplyLink>
      {["刷新", "新增", "批量另存为", "批量修改分类", "批量删除", "弹出窗口"].map((b) => (
        <PlainButton type="button" key={b}>{b}</PlainButton>
      ))}
    </LibraryHead>
    <LibraryBody>
      <ProjectColumn>
        <SearchBox $width="100%">
          <input type="text" aria-label="过滤工程" placeholder="过滤" />
          <button type="button" aria-label="过滤"><Search /></button>
        </SearchBox>
        <PickList $top={6}>
          <li><Pick type="button">系统</Pick></li>
          <li><Pick type="button">工程</Pick></li>
          <li><Pick type="button" $active>GD32F103C8T6</Pick></li>
        </PickList>
      </ProjectColumn>
      <ClassColumn>
        <SearchBox $width="100%">
          <input type="text" aria-label="过滤分类" placeholder="过滤" />
          <button type="button" aria-label="过滤"><Search /></button>
        </SearchBox>
        <PickList $top={4}>
          <li><Pick type="button" $active $height={33}>全部</Pick></li>
        </PickList>
      </ClassColumn>
      <TableBox>
        <Table>
          <colgroup>{columns.map((c) => <col key={c} />)}</colgroup>
          <thead>
            <tr>
              {columns.map((c, i) => (
                <th key={c} scope="col">
                  <Head $pad={i === 0 ? 4 : 5}>
                    {c}
                    <button type="button" aria-label={`按${c}排序`}><Sort /></button>
                  </Head>
                </th>
              ))}
            </tr>
          </thead>
          <tbody>
            {rows.map((row) => (
              <tr key={row[0]}>
                {row.map((cell, i) => <td key={columns[i]}>{cell}</td>)}
              </tr>
            ))}
          </tbody>
        </Table>
      </TableBox>
    </LibraryBody>
    <Footer>
      <FooterPin type="button" aria-label="固定"><Pin /></FooterPin>
      <FooterTab type="button" $active>库</FooterTab>
      <FooterTab type="button">日志</FooterTab>
      <FooterTab type="button">查找结果</FooterTab>
      <Pager>
        <PageButton type="button" aria-label="首页">
          <Icon size={18} width={1.4}><path d="M6 3v16M15 4l-7 7 7 7" /></Icon>
        </PageButton>
        <PageButton type="button" $current>1</PageButton>
        <PageButton type="button" aria-label="末页">
          <Icon size={18} width={1.4}><path d="M16 3v16M7 4l7 7-7 7" /></Icon>
        </PageButton>
        <PageInfo>总计 2 条 | 1 页</PageInfo>
        <SelectBox $width="94px" $height={30} $inset={9} $bg={GREY}>
          <select aria-label="每页条数" defaultValue="50 条/页"><option>50 条/页</option></select>
          <Chevron />
        </SelectBox>
      </Pager>
    </Footer>
  </Library>
);

const App = () => (
  <Page>
    <GlobalStyle />
    <Title />
    <Tools />
    <Workspace>
      <SideStrip>
        <PinButton type="button" aria-label="固定"><Pin /></PinButton>
        <SideTab type="button">所有工程</SideTab>
        <SideTab type="button">工程设计</SideTab>
        <SideTab type="button" $active>库设计</SideTab>
        <SideTab type="button" $end>常用库</SideTab>
      </SideStrip>
      <Properties />
      <Splitter>
        <Handle type="button" aria-label="收起左侧" $top="418px">
          <Triangle dir="left" size={9} />
        </Handle>
      </Splitter>
      <BoardEditor />
      <Splitter>
        <Handle type="button" aria-label="收起右侧" $top="418px">
          <Triangle dir="right" size={9} />
        </Handle>
      </Splitter>
      <Layers />
      <SideStrip $right>
        <PinButton type="button" aria-label="固定"><Pin /></PinButton>
        <SideTab type="button" $right $active>图层</SideTab>
        <SideTab type="button" $right>过滤</SideTab>
        <SideTab type="button" $right $end>属性</SideTab>
      </SideStrip>
    </Workspace>
    <Splitter>
      <FlatHandle type="button" aria-label="收起底部">
        <Triangle dir="down" size={9} />
      </FlatHandle>
    </Splitter>
    <Bottom>
      <LibraryPanel />
      <Splitter>
        <Handle type="button" aria-label="收起预览" $top="170px">
          <Triangle dir="right" size={9} />
        </Handle>
      </Splitter>
      <Preview />
      <Pointers width="400" height="200" viewBox="1580 1017 400 200" fill="#f54b45" stroke="#f54b45" strokeWidth="3" strokeLinejoin="round">
        <path d="M1759 1029l38 9-3 9 166 132-2 2-174-122-7 7-19-34z" />
        <path d="M1597 1109l40-3-1.500 10 176.500 86-1 2-184-73-5 9-26-30z" />
      </Pointers>
    </Bottom>
  </Page>
);

export default App;
